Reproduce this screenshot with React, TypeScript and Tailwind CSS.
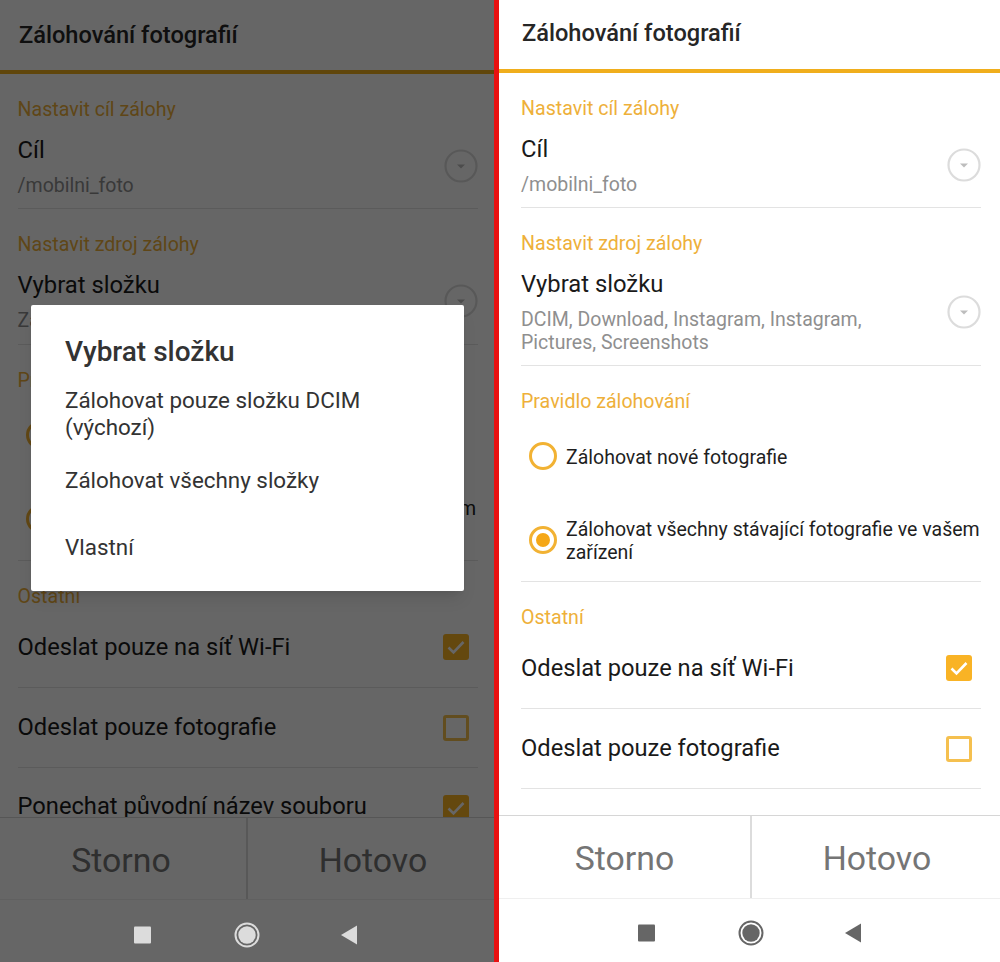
import React from "react";

const font = { fontFamily: "Roboto, 'Noto Sans', sans-serif" };

function Chevron() {
  return (
    <svg width="34" height="34" viewBox="0 0 34 34" className="shrink-0">
      <circle cx="17" cy="17" r="15.5" fill="none" stroke="#dcdcdc" strokeWidth="2.2" />
      <path d="M13 15.5h8L17 19.5z" fill="#bdbdbd" />
    </svg>
  );
}

function Radio({ on }: { on?: boolean }) {
  return (
    <span className="ml-2 mr-[9px] flex h-[28px] w-[28px] shrink-0 items-center justify-center rounded-full border-[3px] border-[#f2b233]">
      {on && <span className="h-[14px] w-[14px] rounded-full bg-[#f5a716]" />}
    </span>
  );
}

function Check({ on }: { on?: boolean }) {
  return on ? (
    <span className="mr-[9px] flex h-[26px] w-[26px] shrink-0 items-center justify-center rounded-[3px] bg-[#f9b325]">
      <svg width="20" height="20" viewBox="0 0 20 20">
        <path d="M2.5 10.5l5 5 10-10.5" fill="none" stroke="#ffffff" strokeWidth="2.6" />
      </svg>
    </span>
  ) : (
    <span className="mr-[9px] h-[26px] w-[26px] shrink-0 rounded-[3px] border-[3px] border-[#f5c04f]" />
  );
}

function Label({ children }: { children: React.ReactNode }) {
  return <div className="-mb-[2px] pt-6 text-[19.6px] leading-[24px] text-[#eeb03a]">{children}</div>;
}

function Picker({ title, sub, pb }: { title: string; sub: React.ReactNode; pb: string }) {
  return (
    <div className={`flex items-center justify-between border-b border-[#e3e3e3] pt-[15px] ${pb}`}>
      <div className="min-w-0">
        <div className="text-[23.8px] leading-[30px] text-[#1a1a1a]">{title}</div>
        <div className="mt-[9px] w-[390px] text-[19.5px] leading-[23px] text-[#8f8f8f]">{sub}</div>
      </div>
      <Chevron />
    </div>
  );
}

function RadioRow({ on, h, border, children }: { on?: boolean; h: string; border?: boolean; children: React.ReactNode }) {
  return (
    <div className={`flex items-center ${h} ${border ? "border-b border-[#e3e3e3]" : ""}`}>
      <Radio on={on} />
      <div className="whitespace-nowrap pt-[2px] text-[19.5px] leading-[23px] text-[#1f1f1f]">{children}</div>
    </div>
  );
}

function ToggleRow({ text, on, h, textPad, border = true }: { text: string; on?: boolean; h: string; textPad: string; border?: boolean }) {
  return (
    <div className={`flex shrink-0 items-center justify-between ${h} ${border ? "border-b border-[#e3e3e3]" : ""}`}>
      <span className={`text-[23.7px] text-[#1a1a1a] ${textPad}`}>{text}</span>
      <Check on={on} />
    </div>
  );
}

function NavBar({ dim }: { dim?: boolean }) {
  const c = dim ? "#dcdcdc" : "#666666";
  return (
    <div className={`relative z-20 flex shrink-0 items-center justify-center ${dim ? "h-[62px] pt-[7px]" : "h-[63px] pl-[3px] pt-[4px]"}`}>
      <svg width="240" height="28" viewBox="0 0 240 28">
        <rect x="7" y="5.5" width="17" height="17" rx="1" fill={c} />
        <circle cx="120" cy="14" r="11.5" fill="none" stroke={c} strokeWidth="2" />
        <circle cx="120" cy="14" r="8.7" fill={c} />
        <path d="M230 4.5v19L214 14z" fill={c} />
      </svg>
    </div>
  );
}

function Screen({ dim }: { dim?: boolean }) {
  return (
    <div className={`relative flex h-full flex-col overflow-hidden bg-white ${dim ? "w-[494px]" : "w-[501px]"}`}>
      <header
        className={`flex shrink-0 items-center border-b-4 border-[#f0ae1c] ${dim ? "h-[74px] pl-[19px] pt-[1px]" : "h-[73px] pb-[2px] pl-[23px]"}`}
      >
        <h1 className="text-[23.6px] font-medium text-[#262626]">Zálohování fotografií</h1>
      </header>

      <main className={`flex min-h-0 flex-1 flex-col overflow-hidden ${dim ? "pl-[17.5px] pr-[16px]" : "pl-[22px] pr-[19px]"}`}>
        <Label>Nastavit cíl zálohy</Label>
        <Picker title="Cíl" sub="/mobilni_foto" pb="pb-[11px]" />
        <Label>Nastavit zdroj zálohy</Label>
        {dim ? (
          <Picker title="Vybrat složku" sub="Zálohovat pouze složku DCIM" pb="pb-[12px]" />
        ) : (
          <Picker title="Vybrat složku" sub={"DCIM, Download, Instagram, Instagram, Pictures, Screenshots"} pb="pb-[11px]" />
        )}
        <Label>Pravidlo zálohování</Label>
        <RadioRow h="h-[88px] shrink-0">Zálohovat nové fotografie</RadioRow>
        <RadioRow on h="h-[82px] shrink-0 pb-[2px]" border>
          Zálohovat všechny stávající fotografie ve vašem
          <br />
          zařízení
        </RadioRow>
        <Label>Ostatní</Label>
        <ToggleRow text="Odeslat pouze na síť Wi-Fi" on h="h-[81px]" textPad="pt-[2px]" />
        <ToggleRow text="Odeslat pouze fotografie" h="h-[80px]" textPad="" />
        {dim && <ToggleRow text="Ponechat původní název souboru" on h="h-[80px]" textPad="pb-[2px]" border={false} />}
      </main>

      <div className={`flex shrink-0 border-y border-t-[#d6d6d6] border-b-[#efefef] ${dim ? "h-[83px]" : "h-[84px]"}`}>
        <div className={`flex shrink-0 items-center justify-center border-r-2 border-[#dcdcdc] text-[33.8px] text-[#757575] ${dim ? "w-[248px] pr-[4px] pt-[5px]" : "w-[253px] pt-[4px]"}`}>Storno</div>
        <div className={`flex flex-1 items-center justify-center text-[33.8px] text-[#757575] ${dim ? "pl-[4px] pt-[5px]" : "pl-[2px] pt-[4px]"}`}>Hotovo</div>
      </div>
      <NavBar dim={dim} />

      {dim && (
        <>
          <div className="absolute inset-0 z-10 bg-black/60" />
          <div className="absolute left-[31px] top-[305px] z-30 h-[286px] w-[433px] rounded-[2px] bg-white pl-[34px] pr-4 pt-[29px] text-[#333333] shadow-lg">
            <div className="text-[28px] font-medium leading-[36px]">Vybrat složku</div>
            <div className="mt-[17px] w-[320px] text-[22.4px] leading-[27px]">Zálohovat pouze složku DCIM (výchozí)</div>
            <div className="mt-[26px] text-[22.4px] leading-[27px]">Zálohovat všechny složky</div>
            <div className="mt-[40px] text-[22.4px] leading-[27px]">Vlastní</div>
          </div>
        </>
      )}
    </div>
  );
}

export default function App() {
  return (
    <div style={font} className="flex h-[962px] w-[1000px] overflow-hidden bg-white">
      <Screen dim />
      <div className="h-full w-[5px] shrink-0 bg-[#e81010]" />
      <Screen />
    </div>
  );
}
